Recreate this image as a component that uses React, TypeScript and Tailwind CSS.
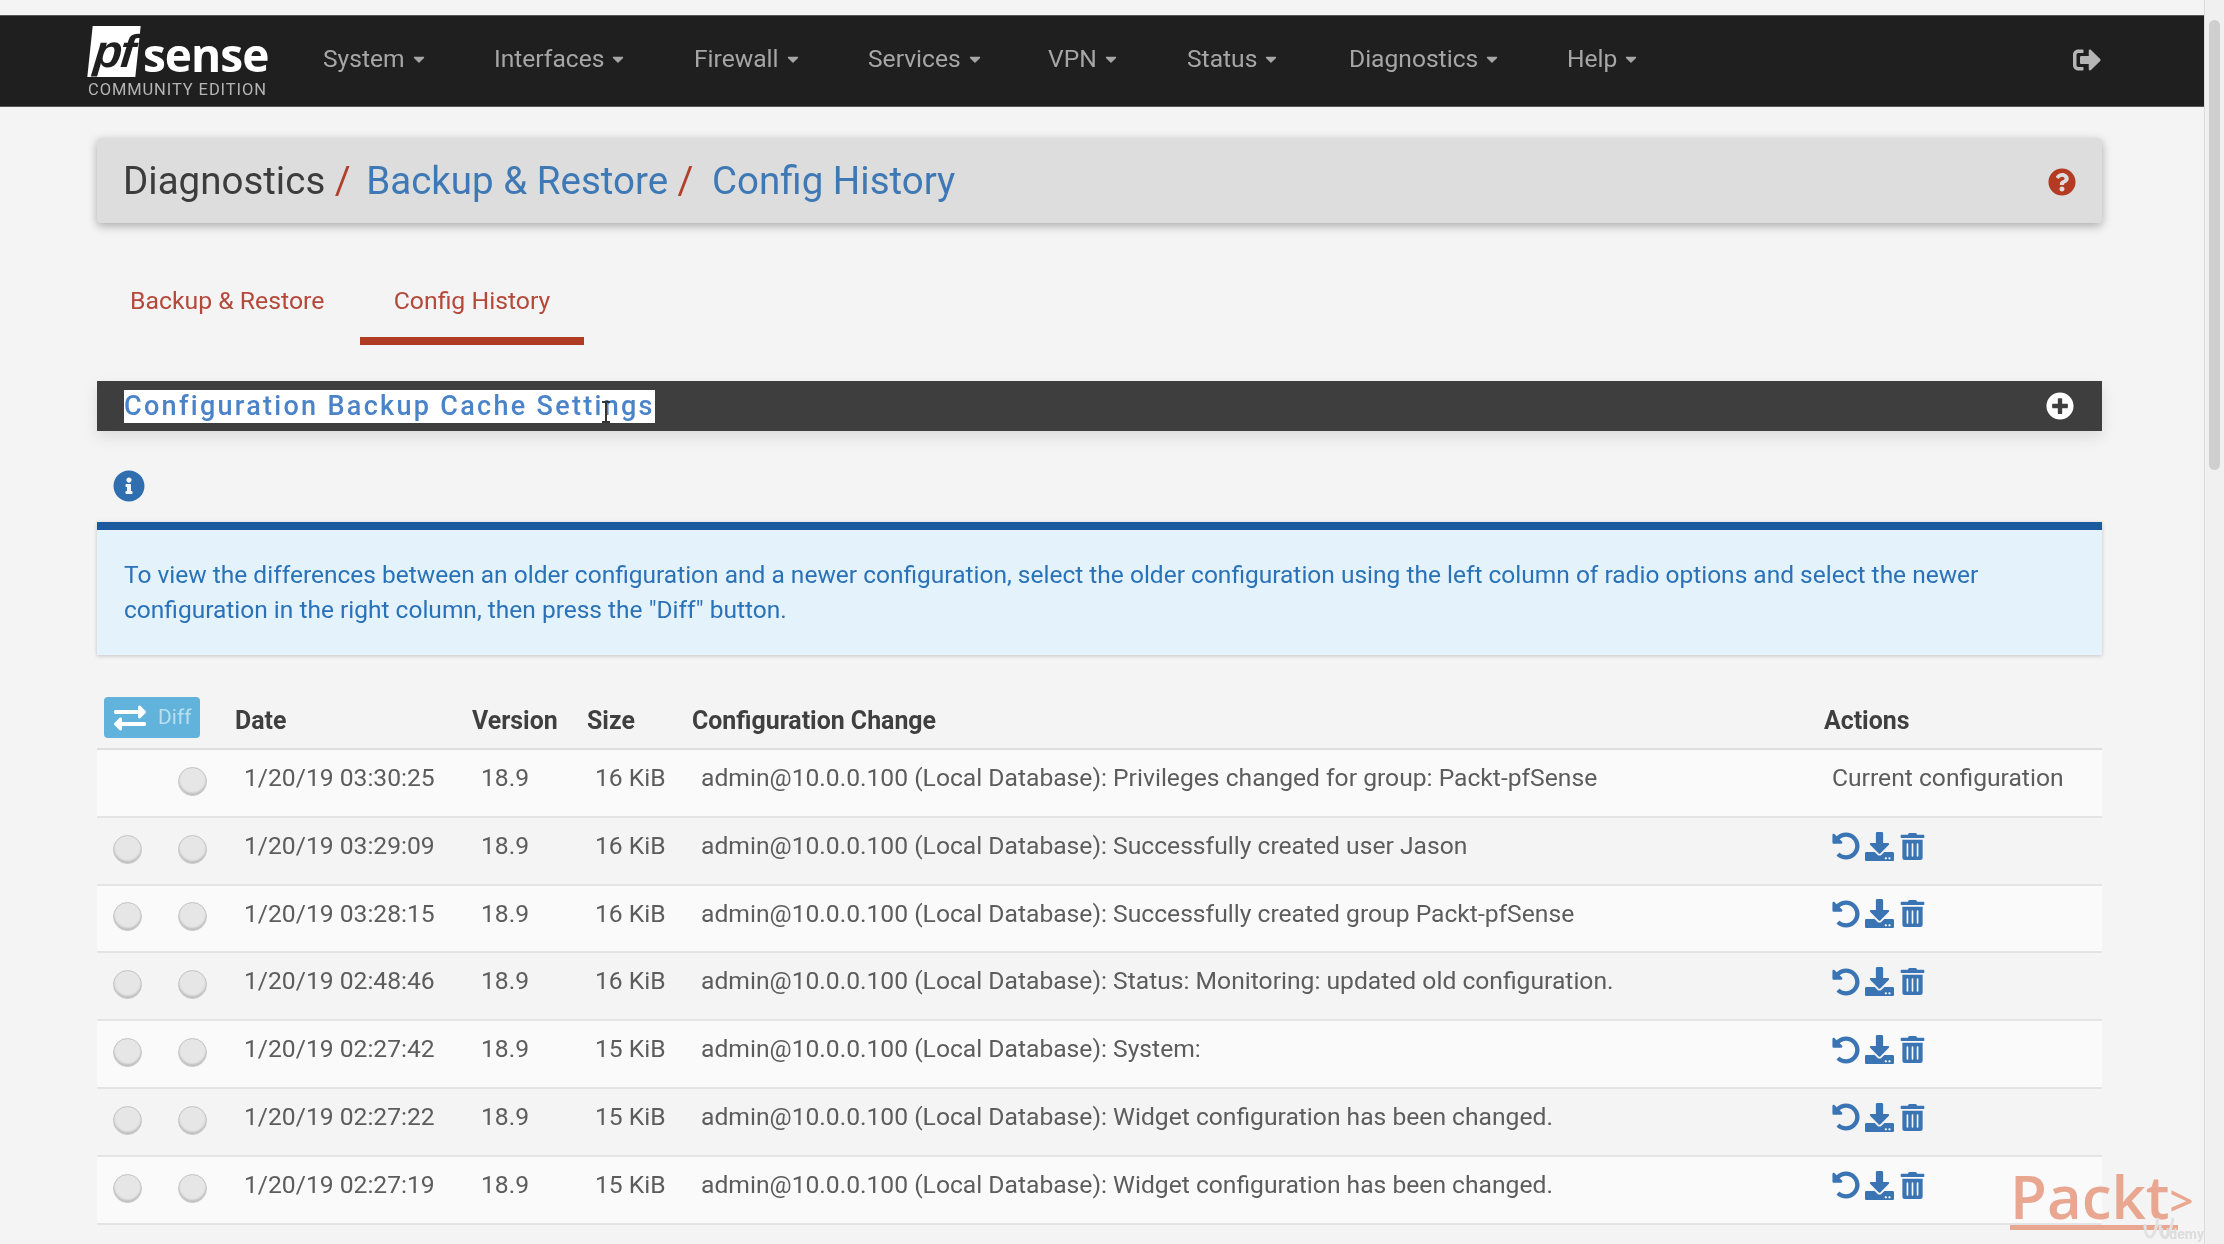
import { FaCaretDown, FaDownload, FaExchangeAlt, FaInfoCircle, FaPlusCircle, FaQuestionCircle, FaSignOutAlt, FaTrashAlt, FaUndoAlt } from "react-icons/fa";

const font = "[font-family:Roboto,'Liberation_Sans',sans-serif]";

const navItems = [
  { label: "System", cls: "w-[171px]" },
  { label: "Interfaces", cls: "w-[200px]" },
  { label: "Firewall", cls: "w-[174px]" },
  { label: "Services", cls: "w-[180px]" },
  { label: "VPN", cls: "w-[139px]" },
  { label: "Status", cls: "w-[162px]" },
  { label: "Diagnostics", cls: "w-[218px]" },
  { label: "Help", cls: "w-[90px]" },
];

const rows = [
  ["1/20/19 03:30:25", "16 KiB", "Privileges changed for group: Packt-pfSense"],
  ["1/20/19 03:29:09", "16 KiB", "Successfully created user Jason"],
  ["1/20/19 03:28:15", "16 KiB", "Successfully created group Packt-pfSense"],
  ["1/20/19 02:48:46", "16 KiB", "Status: Monitoring: updated old configuration."],
  ["1/20/19 02:27:42", "15 KiB", "System:"],
  ["1/20/19 02:27:22", "15 KiB", "Widget configuration has been changed."],
  ["1/20/19 02:27:19", "15 KiB", "Widget configuration has been changed."],
];

function Radio() {
  return <span className="block h-[29px] w-[29px] rounded-full border border-[#c4c4c4] bg-[#e6e6e6] shadow-[inset_0_-2px_2px_#bdbdbd]" />;
}

export default function App() {
  return (
    <div className={`flex h-[1244px] w-full overflow-hidden bg-[#f4f4f4] text-[#5c5c5c] blur-[0.7px] ${font}`}>
      <div className="relative min-w-0 flex-1 pt-[15px]">
        <header className="flex h-[92px] items-center border-y border-[#555] bg-[#1f1f1f] pb-[3px] pl-[88px] pr-[103px]">
          <div className="w-[235px] shrink-0 pt-[7px]">
            <div className="flex h-[51px] items-end">
              <span className="ml-[2px] flex h-[51px] w-[48px] skew-x-[-6deg] items-center justify-center bg-white pb-[2px] text-[46px] font-bold italic leading-[46px] tracking-[-2px] text-[#1f1f1f] [font-family:'Liberation_Sans',sans-serif]">pf</span>
              <span className="ml-[5px] text-[46px] font-bold leading-[46px] tracking-[-1px] text-white [font-family:'Open_Sans',sans-serif]">sense</span>
            </div>
            <div className="mt-[3px] whitespace-nowrap text-[16.5px] leading-[20px] tracking-[0.9px] text-[#b5b5b5]">COMMUNITY EDITION</div>
          </div>
          <nav className="flex items-center text-[24.6px] text-[#a6a6a6]">
            {navItems.map((n) => (
              <span key={n.label} className={`flex items-center gap-[5px] ${n.cls}`}>
                {n.label}
                <FaCaretDown className="h-[18px] w-[18px]" />
              </span>
            ))}
          </nav>
          <FaSignOutAlt className="ml-auto h-[28px] w-[28px] text-[#b5b5b5]" />
        </header>

        <main className="pl-[97px] pr-[102px]">
          <div className="mt-[31px] flex h-[85px] items-center justify-between rounded-[4px] bg-[#dddddd] pl-[26px] pr-[26px] text-[38.5px] shadow-[0_3px_10px_rgba(0,0,0,0.3)]">
            <div className="flex items-center whitespace-pre">
              <span className="text-[#3c3c3c]">Diagnostics</span>
              <span className="text-[#b0402c]"> / </span>
              <span className="ml-[6px] text-[#3f79b5]">Backup &amp; Restore</span>
              <span className="text-[#b0402c]"> / </span>
              <span className="ml-[9px] text-[#3f79b5]">Config History</span>
            </div>
            <FaQuestionCircle className="mt-[2px] h-[28px] w-[28px] text-[#b43a22]" />
          </div>

          <div className="mt-[32px] flex h-[90px] items-start pl-[33px] text-[24.8px] text-[#b5483a]">
            <span className="w-[230px] pt-[27px]">Backup &amp; Restore</span>
            <span className="flex h-[90px] w-[224px] items-start justify-center border-b-[8px] border-[#b13c24] pt-[27px]">Config History</span>
          </div>

          <div className="relative mt-[36px] flex h-[50px] items-center justify-between bg-[#3e3e3e] pl-[27px] pr-[28px] shadow-[0_6px_14px_rgba(0,0,0,0.1)]">
            <span className="bg-white text-[27px] font-medium leading-[33px] tracking-[2.3px] text-[#4a83c8]">Configuration Backup Cache Settings</span>
            <FaPlusCircle className="h-[28px] w-[28px] text-white" />
            <svg className="absolute left-[504px] top-[20px] h-[22px] w-[10px]" viewBox="0 0 10 22" fill="none" stroke="#333" strokeWidth="2">
              <path d="M1 1h8M5 1v20M1 21h8" />
            </svg>
          </div>

          <FaInfoCircle className="ml-[16px] mt-[39px] h-[32px] w-[32px] text-[#2f6fb0]" />

          <div className="mt-[20px] h-[133px] border-t-[8px] border-[#1c5a9f] bg-[#e4f2fb] pl-[27px] pr-[26px] pt-[27px] text-[24.5px] leading-[35px] text-[#2a72b8] shadow-[0_1px_4px_rgba(0,0,0,0.2)]">
            To view the differences between an older configuration and a newer configuration, select the older configuration using the left column of radio options and select the newer configuration in the right column, then press the "Diff" button.
          </div>

          <table className="mt-[40px] w-full table-fixed border-collapse text-left text-[24.65px]">
            <colgroup>
              <col className="w-[138px]" />
              <col className="w-[237px]" />
              <col className="w-[115px]" />
              <col className="w-[105px]" />
              <col />
              <col className="w-[278px]" />
            </colgroup>
            <thead>
              <tr className="h-[54px] border-b-2 border-[#dedede] text-[24.9px] text-[#3f3f3f]">
                <th className="pb-[8px] pl-[7px] font-normal">
                  <span className="flex h-[41px] w-[96px] items-center gap-[12px] rounded-[4px] bg-[#62b3dc] pl-[10px] text-[21px] text-[#b9dff0]">
                    <FaExchangeAlt className="h-[32px] w-[32px] text-white" />
                    Diff
                  </span>
                </th>
                <th className="pb-[1px] font-bold">Date</th>
                <th className="pb-[1px] font-bold">Version</th>
                <th className="pb-[1px] font-bold">Size</th>
                <th className="pb-[1px] font-bold">Configuration Change</th>
                <th className="pb-[1px] font-bold">Actions</th>
              </tr>
            </thead>
            <tbody>
              {rows.map((r, i) => (
                <tr key={r[0]} className={`h-[67.8px] border-b-2 border-[#e4e4e4] ${i % 2 === 0 ? "bg-[#fafafa]" : "bg-[#f4f4f4]"}`}>
                  <td>
                    <div className="flex pb-[3px] pl-[16px]">
                      <span className="w-[65px]">{i > 0 && <Radio />}</span>
                      <Radio />
                    </div>
                  </td>
                  <td className="pb-[9px] pl-[9px]">{r[0]}</td>
                  <td className="pb-[9px] pl-[9px]">18.9</td>
                  <td className="pb-[9px] pl-[8px]">{r[1]}</td>
                  <td className="pb-[9px] pl-[9px]">admin@10.0.0.100 (Local Database): {r[2]}</td>
                  <td className="pb-[9px] pl-[8px]">
                    {i === 0 ? "Current configuration" : (
                      <div className="flex items-center text-[#3a74b3]">
                        <FaUndoAlt className="h-[28px] w-[28px]" />
                        <FaDownload className="ml-[5px] h-[29px] w-[29px]" />
                        <FaTrashAlt className="ml-[6px] h-[27px] w-[25px]" />
                      </div>
                    )}
                  </td>
                </tr>
              ))}
            </tbody>
          </table>
        </main>

        <div className="absolute left-[2010px] top-[1162px] flex h-[68px] w-[168px] items-end whitespace-nowrap border-b-[5px] border-[#e9a792] pb-[0px] text-[60px] font-semibold leading-[58px] text-[#e9a792] [font-family:'Open_Sans',sans-serif]">
          Packt<span className="text-[42px] leading-[50px]">&gt;</span>
        </div>
        <svg className="absolute left-[2142px] top-[1216px] h-[24px] w-[34px]" viewBox="0 0 34 24" fill="none" stroke="#e2e2e2" strokeWidth="3">
          <path d="M3 8c0 8 1 13 5 13s6-8 8-19M18 8c0 8 1 13 5 13s6-8 8-19" />
        </svg>
        <div className="absolute right-[0px] top-[1226px] text-[14px] font-bold leading-[16px] text-[#dcdcdc]">Udemy</div>
      </div>

      <aside className="flex w-[20px] shrink-0 flex-col border-l border-[#dcdcdc] bg-[#f0f0f0] px-[4px] pt-[20px]">
        <div className="h-[450px] rounded-full bg-[#cfcfcf]" />
      </aside>
    </div>
  );
}
